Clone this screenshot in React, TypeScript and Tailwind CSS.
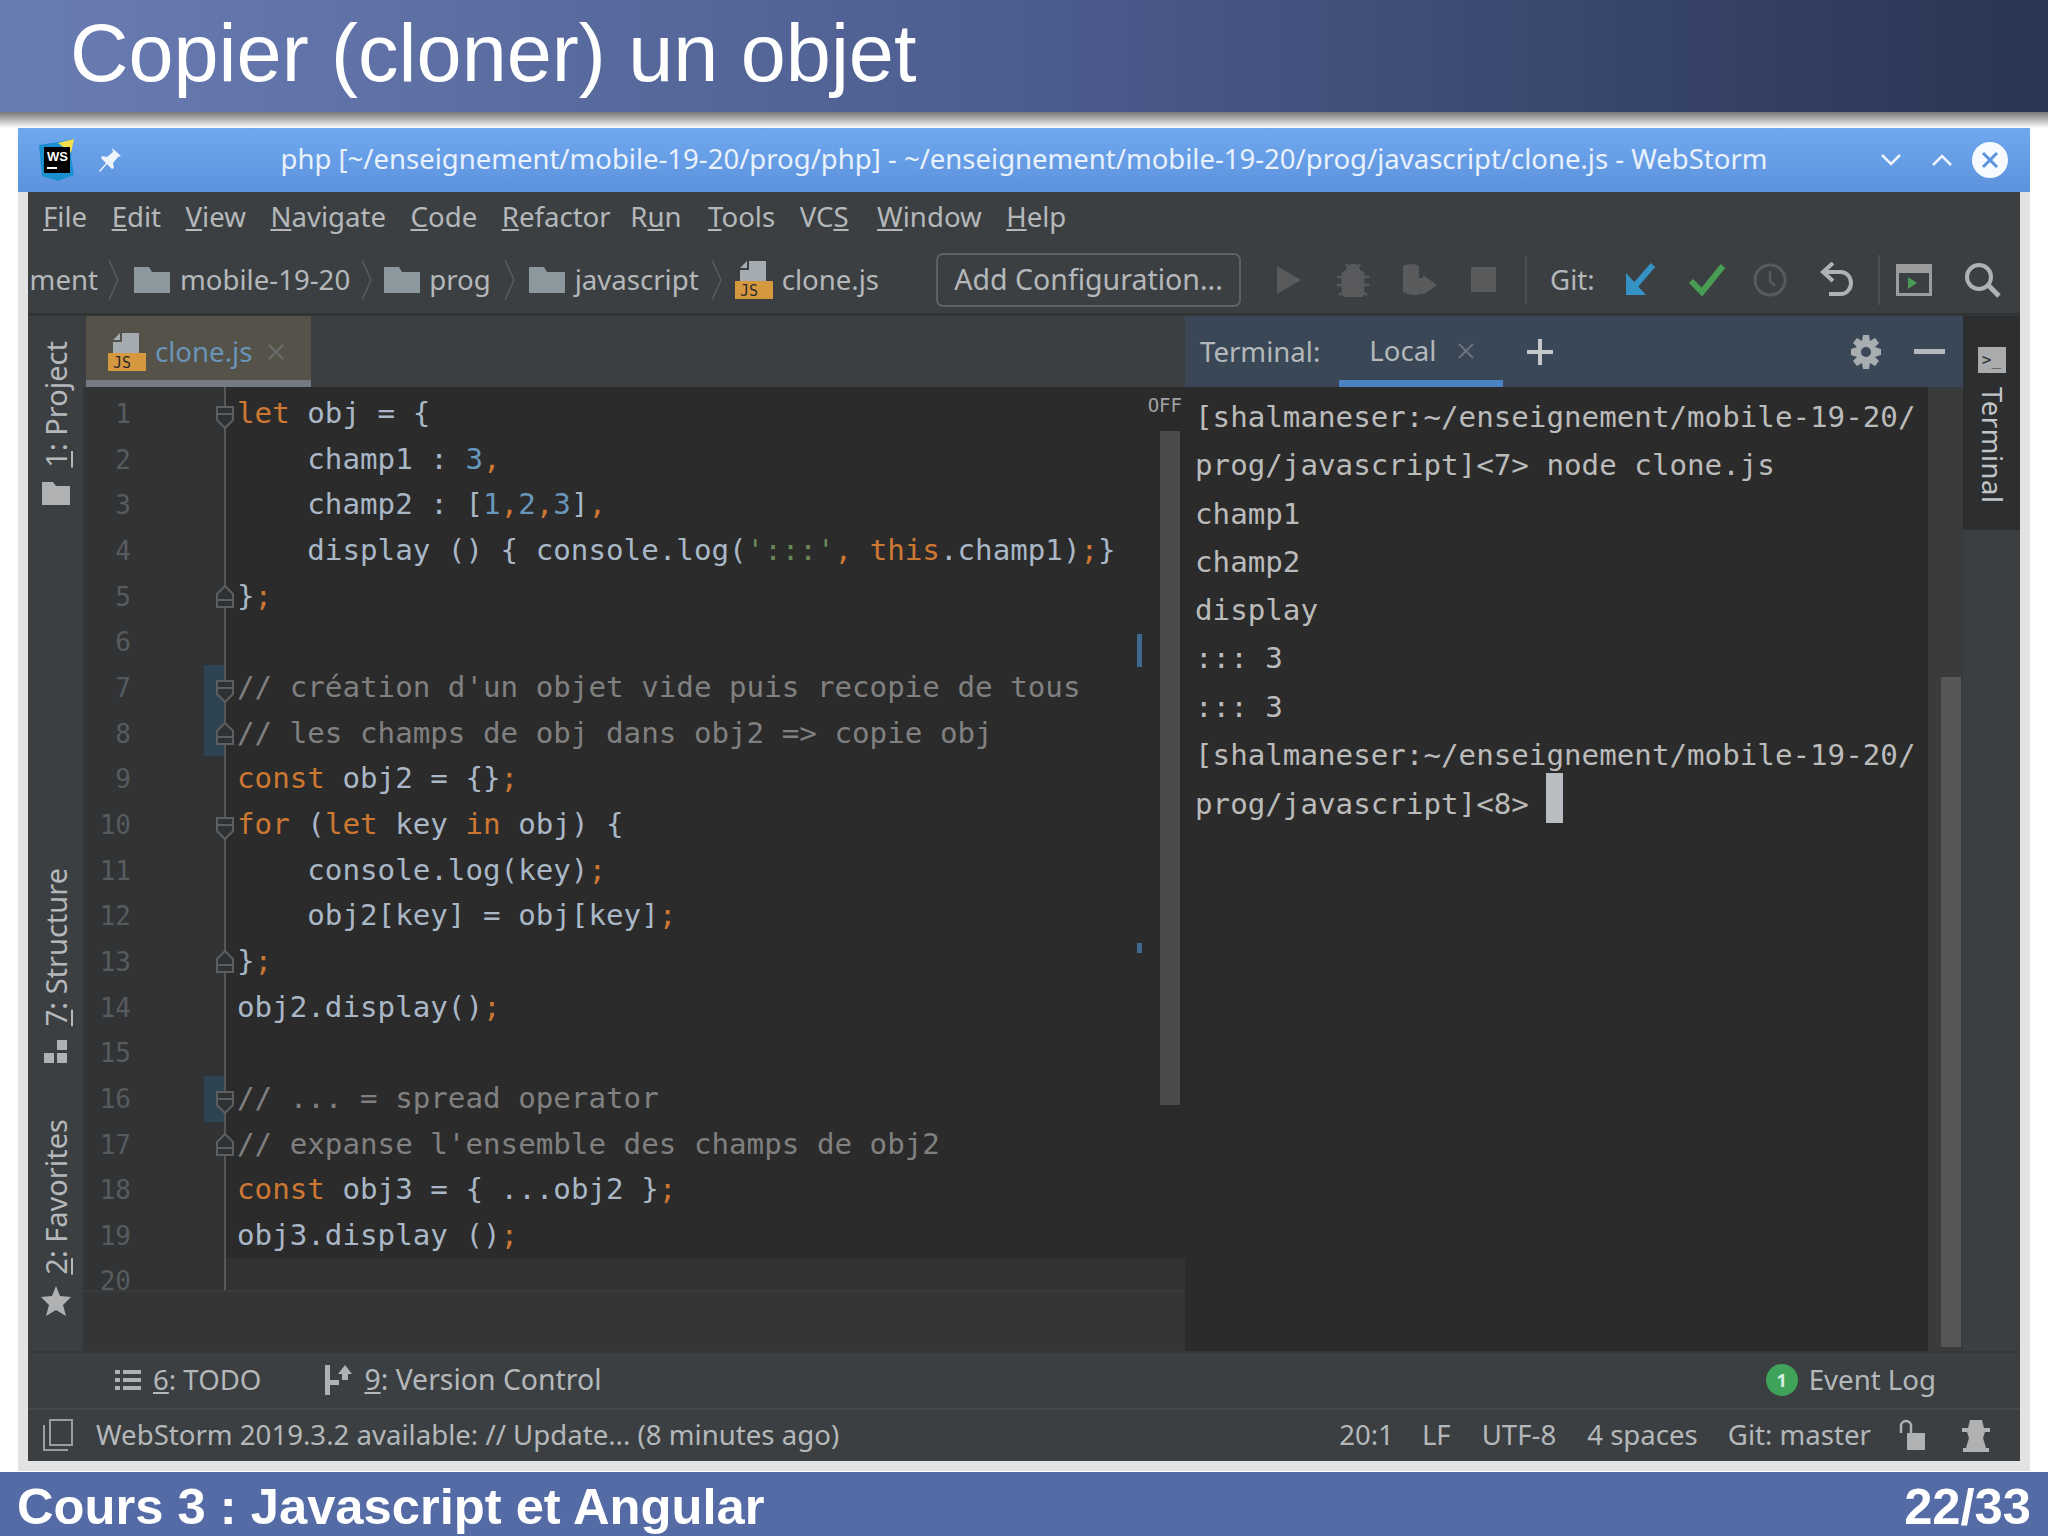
const ui = "font-['Noto_Sans','Open_Sans',sans-serif]";
const mono = "font-['DejaVu_Sans_Mono','Liberation_Mono',monospace]";

type Kind = "d" | "k" | "n" | "c" | "s";
type Tok = [Kind, string];

const tokClass: Record<Kind, string> = {
  d: "text-[#a9b7c6]",
  k: "text-[#cc7832]",
  n: "text-[#6897bb]",
  c: "text-[#808080]",
  s: "text-[#6a8759]",
};

const code: Tok[][] = [
  [["k", "let"], ["d", " obj = {"]],
  [["d", "    champ1 : "], ["n", "3"], ["k", ","]],
  [["d", "    champ2 : ["], ["n", "1"], ["k", ","], ["n", "2"], ["k", ","], ["n", "3"], ["d", "]"], ["k", ","]],
  [["d", "    display () { console.log("], ["s", "':::'"], ["k", ", this"], ["d", ".champ1)"], ["k", ";"], ["d", "}"]],
  [["d", "}"], ["k", ";"]],
  [],
  [["c", "// création d'un objet vide puis recopie de tous"]],
  [["c", "// les champs de obj dans obj2 => copie obj"]],
  [["k", "const"], ["d", " obj2 = {}"], ["k", ";"]],
  [["k", "for"], ["d", " ("], ["k", "let"], ["d", " key "], ["k", "in"], ["d", " obj) {"]],
  [["d", "    console.log(key)"], ["k", ";"]],
  [["d", "    obj2[key] = obj[key]"], ["k", ";"]],
  [["d", "}"], ["k", ";"]],
  [["d", "obj2.display()"], ["k", ";"]],
  [],
  [["c", "// ... = spread operator"]],
  [["c", "// expanse l'ensemble des champs de obj2"]],
  [["k", "const"], ["d", " obj3 = { ...obj2 }"], ["k", ";"]],
  [["d", "obj3.display ()"], ["k", ";"]],
  [],
];

const foldOpen = [1, 7, 10, 16];
const foldClose = [5, 8, 13, 17];
const changed = [7, 8, 16];

const terminal = [
  "[shalmaneser:~/enseignement/mobile-19-20/",
  "prog/javascript]<7> node clone.js",
  "champ1",
  "champ2",
  "display",
  "::: 3",
  "::: 3",
  "[shalmaneser:~/enseignement/mobile-19-20/",
];

function Folder() {
  return (
    <svg width="36" height="26" viewBox="0 0 36 26" className="shrink-0">
      <path d="M0 0h15l3 5h18v21H0z" fill="#8d979e" />
    </svg>
  );
}

function JsIcon() {
  return (
    <svg width="38" height="38" viewBox="0 0 38 38" className="shrink-0">
      <path d="M14 0h17v20H5V9h9z" fill="#a4abb1" />
      <path d="M5 7l7-7v7z" fill="#a4abb1" />
      <rect x="0" y="20" width="38" height="18" fill="#d6983f" />
      <text x="5" y="35" fontSize="15" fill="#2b2b2b" fontFamily="DejaVu Sans Mono">JS</text>
    </svg>
  );
}

function Chevron() {
  return (
    <svg width="12" height="42" viewBox="0 0 12 42" className="shrink-0">
      <path d="M1 1l9 20-9 20" fill="none" stroke="#585a5c" strokeWidth="1.5" />
    </svg>
  );
}

function Fold({ open }: { open: boolean }) {
  return (
    <svg width="18" height="24" viewBox="0 0 18 24" className={open ? "" : "rotate-180"}>
      <path d="M1 1h16v13l-8 8-8-8z" fill="#2f3133" stroke="#5c5f61" strokeWidth="2" />
      <path d="M1 8h16" stroke="#5c5f61" strokeWidth="2" />
    </svg>
  );
}

function Side({ hot, rest, icon, className }: { hot: string; rest: string; icon: React.ReactNode; className: string }) {
  return (
    <div className={`flex flex-col items-center gap-[14px] ${className}`}>
      <span className="[writing-mode:vertical-rl] rotate-180 text-[29px] leading-[30px] text-[#b4b8bb] whitespace-pre">
        <u>{hot}</u>
        {rest}
      </span>
      {icon}
    </div>
  );
}

export default function App() {
  return (
    <div className={`w-[2048px] h-[1536px] flex flex-col overflow-hidden bg-white ${ui}`}>
      <header className="h-[112px] shrink-0 flex items-center pl-[70px] bg-gradient-to-r from-[#6a7db3] via-[#4c5c8e] to-[#2a3553]">
        <h1 className="font-['Liberation_Sans',sans-serif] text-[81px] leading-none text-white pb-[6px]">Copier (cloner) un objet</h1>
      </header>
      <div className="h-[16px] shrink-0 bg-gradient-to-b from-[#777777] to-white" />

      <div className="flex-1 min-h-0 mx-[18px] flex flex-col bg-[#e4e3e3]">
        {/* window title */}
        <div className="h-[64px] shrink-0 flex items-center bg-gradient-to-b from-[#70a8f0] to-[#5c93dc] text-[#e9f1fb]">
          <svg width="38" height="42" viewBox="0 0 38 42" className="ml-[20px] shrink-0">
            <path d="M1 6l20-3 14-3-2 18 3 18-16 6-16-5z" fill="#1a8fd0" />
            <path d="M20 4l16-4-3 14z" fill="#f4e04d" />
            <rect x="6" y="8" width="26" height="26" fill="#000" />
            <text x="9" y="22" fontSize="13" fontWeight="bold" fill="#fff" fontFamily="Liberation Sans">WS</text>
            <rect x="9" y="28" width="10" height="2" fill="#fff" />
          </svg>
          <svg width="24" height="26" viewBox="0 0 24 26" className="ml-[22px] shrink-0">
            <path d="M14 1l9 8-3 1-5 6 1 5-2 1-5-5-7 8-1-1 7-8-5-5 1-2 5 1 6-5z" fill="#eef4fc" />
          </svg>
          <div className="flex-1 text-center text-[27.5px] leading-none pb-[2px] pl-[46px] whitespace-nowrap">
            php [~/enseignement/mobile-19-20/prog/php] - ~/enseignement/mobile-19-20/prog/javascript/clone.js - WebStorm
          </div>
          <svg width="22" height="14" viewBox="0 0 22 14" className="shrink-0 mr-[29px]">
            <path d="M2 2l9 9 9-9" fill="none" stroke="#eef4fc" strokeWidth="2.5" />
          </svg>
          <svg width="22" height="14" viewBox="0 0 22 14" className="shrink-0 mr-[19px]">
            <path d="M2 12l9-9 9 9" fill="none" stroke="#eef4fc" strokeWidth="2.5" />
          </svg>
          <svg width="36" height="36" viewBox="0 0 36 36" className="shrink-0 mr-[22px]">
            <circle cx="18" cy="18" r="18" fill="#f6f9fd" />
            <path d="M11 11l14 14M25 11L11 25" stroke="#5c93dc" strokeWidth="3" />
          </svg>
        </div>

        <div className="flex-1 min-h-0 px-[10px] pb-[10px] flex flex-col">
          <div className="flex-1 min-h-0 flex flex-col bg-[#3c3f41] text-[#b4b8bb] text-[27.6px]">
            {/* menu */}
            <nav className="h-[50px] shrink-0 flex items-center gap-[24.5px] pl-[15px] leading-none">
              <span><u>F</u>ile</span>
              <span><u>E</u>dit</span>
              <span><u>V</u>iew</span>
              <span><u>N</u>avigate</span>
              <span><u>C</u>ode</span>
              <span><u>R</u>efactor</span>
              <span className="-ml-[5px] mr-[2px]">R<u>u</u>n</span>
              <span><u>T</u>ools</span>
              <span className="mr-[4px]">VC<u>S</u></span>
              <span><u>W</u>indow</span>
              <span><u>H</u>elp</span>
            </nav>

            {/* toolbar */}
            <div className="h-[74px] shrink-0 flex items-center pt-[4px] border-b-[3px] border-[#323436] leading-none">
              <span className="ml-[2px] w-[68px] overflow-hidden flex justify-end">ment</span>
              <span className="ml-[10px] mr-[14px]"><Chevron /></span>
              <Folder />
              <span className="ml-[10px]">mobile-19-20</span>
              <span className="mx-[11px]"><Chevron /></span>
              <Folder />
              <span className="ml-[9px]">prog</span>
              <span className="mx-[13px]"><Chevron /></span>
              <Folder />
              <span className="ml-[10px]">javascript</span>
              <span className="mx-[12px]"><Chevron /></span>
              <JsIcon />
              <span className="ml-[9px]">clone.js</span>
              <div className="ml-[57px] w-[305px] h-[54px] rounded-[7px] border-2 border-[#5e6163] flex items-center justify-center shrink-0 text-[28.5px]">
                Add Configuration...
              </div>
              <svg width="26" height="30" viewBox="0 0 26 30" className="ml-[35px] shrink-0">
                <path d="M1 1l24 14L1 29z" fill="#585a5c" />
              </svg>
              <svg width="32" height="34" viewBox="0 0 32 34" className="ml-[35px] shrink-0">
                <path d="M10 8a6 6 0 0 1 12 0l4 2v20a10 6 0 0 1-20 0V10zM0 14h32M0 22h32M2 32l6-4M30 32l-6-4M9 1l3 4M23 1l-3 4" fill="#585a5c" stroke="#585a5c" strokeWidth="2.5" />
              </svg>
              <svg width="38" height="34" viewBox="0 0 38 34" className="ml-[32px] shrink-0">
                <path d="M2 3q8-4 16 0v12h4v15q-10 5-20-1z" fill="#585a5c" />
                <path d="M22 12l14 10-14 10z" fill="#585a5c" />
              </svg>
              <div className="ml-[32px] w-[25px] h-[25px] bg-[#585a5c] shrink-0" />
              <div className="ml-[29px] w-[2px] h-[50px] bg-[#4d5052] shrink-0" />
              <span className="ml-[23px]">Git:</span>
              <svg width="30" height="34" viewBox="0 0 30 34" className="ml-[30px] shrink-0">
                <path d="M28 2L9 24" stroke="#3592c4" strokeWidth="6" />
                <path d="M1 10v22h20z" fill="#3592c4" />
              </svg>
              <svg width="38" height="34" viewBox="0 0 38 34" className="ml-[33px] shrink-0">
                <path d="M3 18l11 11L35 3" fill="none" stroke="#499c54" strokeWidth="6" />
              </svg>
              <svg width="34" height="34" viewBox="0 0 34 34" className="ml-[27px] shrink-0">
                <circle cx="17" cy="17" r="15" fill="none" stroke="#585a5c" strokeWidth="3" />
                <path d="M17 8v10l5 5" fill="none" stroke="#585a5c" strokeWidth="2.5" />
              </svg>
              <svg width="34" height="36" viewBox="0 0 34 36" className="ml-[33px] shrink-0">
                <path d="M13 1L3 10l10 9" fill="none" stroke="#afb1b3" strokeWidth="4" />
                <path d="M5 10h16a10 11 0 0 1 0 22H9" fill="none" stroke="#afb1b3" strokeWidth="4" />
              </svg>
              <div className="ml-[24px] w-[2px] h-[50px] bg-[#4d5052] shrink-0" />
              <svg width="36" height="32" viewBox="0 0 36 32" className="ml-[16px] shrink-0">
                <rect x="1.5" y="1.5" width="33" height="29" fill="none" stroke="#9a9c9e" strokeWidth="3" />
                <rect x="1" y="1" width="34" height="8" fill="#9a9c9e" />
                <path d="M12 13l9 6-9 6z" fill="#499c54" />
              </svg>
              <svg width="38" height="36" viewBox="0 0 38 36" className="ml-[32px] shrink-0">
                <circle cx="15" cy="15" r="12" fill="none" stroke="#afb1b3" strokeWidth="4" />
                <path d="M24 23l11 11" stroke="#afb1b3" strokeWidth="5" />
              </svg>
            </div>

            {/* main */}
            <div className="flex-1 min-h-0 flex">
              <aside className="w-[55px] shrink-0 flex flex-col items-center bg-[#3c3f41]">
                <Side
                  hot="1"
                  rest=": Project"
                  className="mt-[25px]"
                  icon={
                    <svg width="28" height="23" viewBox="0 0 28 23">
                      <path d="M0 0h11l3 4h14v19H0z" fill="#afb1b3" />
                    </svg>
                  }
                />
                <div className="flex-1" />
                <Side
                  hot="7"
                  rest=": Structure"
                  className=""
                  icon={
                    <svg width="24" height="23" viewBox="0 0 24 23">
                      <path d="M13 0h10v10H13zM0 13h10v10H0zM13 13h10v10H13z" fill="#afb1b3" />
                    </svg>
                  }
                />
                <Side
                  hot="2"
                  rest=": Favorites"
                  className="mt-[56px] mb-[35px]"
                  icon={
                    <svg width="30" height="30" viewBox="0 0 30 30" className="-mt-[3px]">
                      <path d="M15 0l4 10 11 1-8 8 3 11-10-6-10 6 3-11-8-8 11-1z" fill="#afb1b3" />
                    </svg>
                  }
                />
              </aside>

              {/* editor */}
              <section className="w-[1102px] shrink-0 flex flex-col">
                <div className="h-[71px] shrink-0 pl-[3px]">
                  <div className="w-[225px] h-full flex flex-col bg-[#55524a]">
                    <div className="flex-1 flex items-center pl-[22px] pt-[7px] gap-[9px] leading-none text-[#6a95b8]">
                      <JsIcon />
                      <span>clone.js</span>
                      <svg width="18" height="18" viewBox="0 0 18 18" className="ml-[6px]">
                        <path d="M2 2l14 14M16 2L2 16" stroke="#6b6d6c" strokeWidth="2" />
                      </svg>
                    </div>
                    <div className="h-[7px] bg-[#747a80]" />
                  </div>
                </div>

                <div className={`h-[903px] shrink-0 overflow-hidden relative pt-[4px] bg-[#2b2b2b] ${mono} text-[29.2px]`}>
                  <div className="absolute left-0 top-0 bottom-0 w-[142px] bg-[#313335]" />
                  {code.map((tokens, i) => {
                    const n = i + 1;
                    return (
                      <div key={n} className={`relative flex h-[45.67px] leading-[45.67px] whitespace-pre ${n === 20 ? "bg-[#323232]" : ""}`}>
                        <div className={`relative w-[142px] shrink-0 text-right pr-[94px] text-[#585b5e] ${n === 20 ? "bg-[#313335]" : ""}`}>
                          {changed.includes(n) && <div className="absolute right-0 top-0 bottom-0 w-[21px] bg-[#2f4452]" />}
                          <span className="relative text-[26px]">{n}</span>
                        </div>
                        <div className="pl-[12px]">
                          {tokens.map(([kind, text], j) => (
                            <span key={j} className={tokClass[kind]}>{text}</span>
                          ))}
                        </div>
                        {foldOpen.includes(n) && (
                          <div className="absolute left-[133px] top-[15px] z-10 flex"><Fold open /></div>
                        )}
                        {foldClose.includes(n) && (
                          <div className="absolute left-[133px] top-[10px] z-10 flex"><Fold open={false} /></div>
                        )}
                      </div>
                    );
                  })}
                  <div className="absolute left-[141px] top-0 bottom-0 w-[2px] bg-[#555759]" />
                  <span className="absolute right-[3px] top-[8px] text-[19px] leading-[20px] text-[#a0a2a4]">OFF</span>
                  <div className="absolute right-[5px] top-[44px] w-[20px] h-[674px] bg-[#4a4b4c]" />
                  <div className="absolute left-[1054px] top-[247px] w-[5px] h-[33px] bg-[#3f6a90]" />
                  <div className="absolute left-[1054px] top-[556px] w-[5px] h-[10px] bg-[#3f6a90]" />
                </div>
                <div className="flex-1 border-t-[2px] border-[#393b3d] bg-[#333537]" />
              </section>

              {/* terminal */}
              <section className="w-[778px] shrink-0 flex flex-col">
                <div className="h-[71px] shrink-0 flex items-center bg-[#3a4756] leading-none pl-[15px]">
                  <span>Terminal:</span>
                  <div className="ml-[19px] w-[164px] h-full border-b-[7px] border-[#4a82c4] flex items-center pl-[30px] pt-[6px] gap-[21px]">
                    <span>Local</span>
                    <svg width="18" height="18" viewBox="0 0 18 18">
                      <path d="M2 2l14 14M16 2L2 16" stroke="#6b7480" strokeWidth="2" />
                    </svg>
                  </div>
                  <svg width="26" height="26" viewBox="0 0 26 26" className="ml-[24px]">
                    <path d="M13 0v26M0 13h26" stroke="#c4c8cb" strokeWidth="4" />
                  </svg>
                  <svg width="32" height="34" viewBox="0 0 32 34" className="ml-auto">
                    <path d="M13 0h6l1 6 5-3 4 5-4 4 6 2v6l-6 2 4 4-4 5-5-3-1 6h-6l-1-6-5 3-4-5 4-4-6-2v-6l6-2-4-4 4-5 5 3zM16 12a5 5 0 1 0 0 10 5 5 0 0 0 0-10z" fill="#a8adb0" fillRule="evenodd" />
                  </svg>
                  <div className="ml-[32px] mr-[18px] w-[31px] h-[5px] bg-[#b5bbbd]" />
                </div>
                <div className="flex-1 min-h-0 flex">
                  <div className={`flex-1 bg-[#2b2b2b] pl-[10px] pt-[6px] ${mono} text-[29.2px] leading-[48.3px] text-[#bbbbbb] whitespace-pre`}>
                    {terminal.map((t, i) => (
                      <div key={i}>{t}</div>
                    ))}
                    <div className="flex items-center">
                      <span>prog/javascript]&lt;8&gt; </span>
                      <span className="w-[17px] h-[50px] -translate-y-[6px] bg-[#b9bcc0]" />
                    </div>
                  </div>
                  <div className="w-[35px] shrink-0 bg-[#3a3b3c] flex flex-col pl-[13px] pr-[2px] pb-[4px]">
                    <div className="flex-1" />
                    <div className="h-[670px] bg-[#555657]" />
                  </div>
                </div>
              </section>

              {/* right stripe */}
              <aside className="flex-1 flex flex-col">
                <div className="h-[214px] bg-[#2c2e30] flex flex-col items-center pt-[31px]">
                  <div className="w-[28px] h-[26px] bg-[#a9abad] flex items-center justify-center text-[16px] leading-none text-[#2b2b2b] font-['DejaVu_Sans_Mono',monospace]">&gt;_</div>
                  <span className="mt-[14px] [writing-mode:vertical-rl] text-[27.5px] leading-[30px] text-[#c2c5c8] tracking-[0.5px]">Terminal</span>
                </div>
              </aside>
            </div>

            {/* tool windows */}
            <div className="h-[57px] shrink-0 flex items-center pb-[2px] border-t-[2px] border-[#353739] leading-none">
              <svg width="26" height="22" viewBox="0 0 26 22" className="ml-[87px]">
                <path d="M0 1h5v4H0zM8 1h18v4H8zM0 9h5v4H0zM8 9h18v4H8zM0 17h5v4H0zM8 17h18v4H8z" fill="#afb1b3" />
              </svg>
              <span className="ml-[12px]"><u>6</u>: TODO</span>
              <svg width="28" height="30" viewBox="0 0 28 30" className="ml-[63px]">
                <path d="M1 0h5v15h9v5H6v10H1zM21 0l7 9h-4v6h-6V9h-4z" fill="#afb1b3" />
              </svg>
              <span className="ml-[12px] text-[28.4px]"><u>9</u>: Version Control</span>
              <div className="ml-auto w-[32px] h-[32px] rounded-full bg-[#3fa35a] text-[18px] font-bold text-[#d5f0e0] flex items-center justify-center">1</div>
              <span className="ml-[11px] mr-[84px]">Event Log</span>
            </div>

            {/* status */}
            <div className="h-[53px] shrink-0 flex items-center pb-[2px] border-t-[2px] border-[#444749] leading-none">
              <svg width="30" height="32" viewBox="0 0 30 32" className="ml-[15px]">
                <path d="M7 1h22v25H7zM1 6v25h24" fill="none" stroke="#9a9c9e" strokeWidth="2" />
              </svg>
              <span className="ml-[23px]">WebStorm 2019.3.2 available: // Update... (8 minutes ago)</span>
              <span className="ml-auto">20:1</span>
              <span className="ml-[28px]">LF</span>
              <span className="ml-[31px]">UTF-8</span>
              <span className="ml-[31px]">4 spaces</span>
              <span className="ml-[30px]">Git: master</span>
              <svg width="28" height="32" viewBox="0 0 28 32" className="ml-[28px]">
                <path d="M2 14V7a5 5 0 0 1 10 0v7" fill="none" stroke="#afb1b3" strokeWidth="2.5" />
                <path d="M8 14h18v17H8z" fill="#afb1b3" />
              </svg>
              <svg width="32" height="34" viewBox="0 0 32 34" className="ml-[33px] mr-[28px]">
                <path d="M10 2h12l2 8h6v4h-5l-2 6 3 10h3v4H3v-4h3l3-10-2-6H2v-4h6z" fill="#afb1b3" />
              </svg>
            </div>
          </div>
        </div>
      </div>

      <footer className="h-[65px] shrink-0 flex items-center justify-between pt-[6px] px-[17px] bg-[#556ba6] border-t border-white font-['Liberation_Sans',sans-serif] font-bold text-white text-[50.7px] leading-none">
        <span>Cours 3 : Javascript et Angular</span>
        <span>22/33</span>
      </footer>
    </div>
  );
}
